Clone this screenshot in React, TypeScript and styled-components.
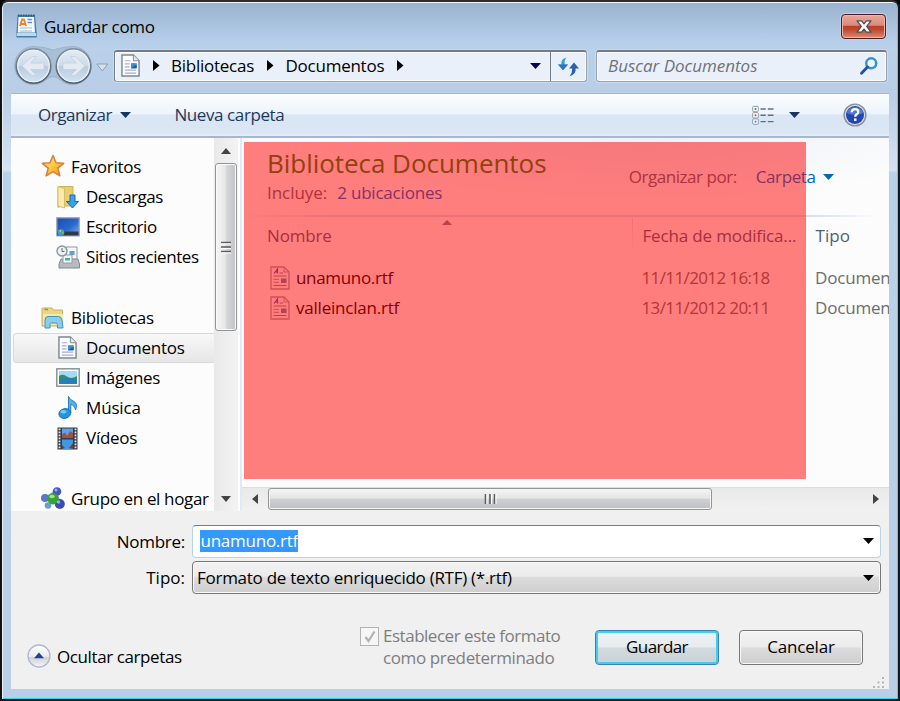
import React from 'react';
import styled, { createGlobalStyle } from 'styled-components';

const Global = createGlobalStyle`
  * { box-sizing: border-box; }
  body { margin: 0; background: #000; color: #000; font-family: "Open Sans", "Noto Sans", sans-serif; }
  svg { display: block; flex: none; overflow: visible; }
`;

/* ---------- text ---------- */
const Text = styled.span<{ $size?: number; $color?: string; $ls?: number; $italic?: boolean; $ml?: number }>`
  flex: none;
  font-size: ${p => p.$size ?? 17}px;
  line-height: 22px;
  white-space: pre;
  letter-spacing: ${p => p.$ls ?? -0.35}px;
  color: ${p => p.$color ?? '#000'};
  font-style: ${p => (p.$italic ? 'italic' : 'normal')};
  margin-left: ${p => p.$ml ?? 0}px;
`;

/* ---------- window frame ---------- */
const Frame = styled.div`
  width: 900px;
  height: 701px;
  overflow: hidden;
  display: flex;
  flex-direction: column;
  padding: 0 9px 10px 9px;
  border: 2px solid #16191c;
  border-top-color: #302d2d;
  border-left-color: #111;
  border-radius: 8px 8px 0 0;
  background: linear-gradient(#99b3d0 0, #a3bcd8 14px, #b5cde8 38px, #b9d1ea 46px, #b9cde6 90px, #d4e2f2 168px, #b9d1ea 171px, #b9cfe9 100%);
  box-shadow: inset 0 2px 0 -1px #f4f8fb, inset 1px 0 0 #e8eff7, inset -1px 0 0 #3fd2ee, inset 0 -1px 0 #35d0ec;
`;
const TitleBar = styled.header`
  flex: none;
  height: 43px;
  display: flex;
  align-items: flex-start;
  padding: 12px 3px 0 5px;
`;
const TitleText = styled.div`
  flex: 1;
  display: flex;
  padding: 2px 0 0 6px;
`;
const CloseButton = styled.button`
  width: 45px;
  height: 25px;
  padding: 0;
  display: flex;
  align-items: center;
  justify-content: center;
  border: 1.5px solid #4e1a22;
  border-radius: 4px;
  background: linear-gradient(#e8a79b 0, #d9897c 45%, #bb3d25 48%, #c04a30 65%, #dc8c72 100%);
  box-shadow: inset 0 0 0 1px #efb6ab, 0 0 0 1px #c3d3e6;
`;

/* ---------- navigation bar ---------- */
const NavBar = styled.nav`
  flex: none;
  height: 48px;
  display: flex;
  align-items: flex-start;
  padding: 0 2px 0 1px;
`;
const AddressBar = styled.div`
  width: 473px;
  height: 32px;
  margin: 5px 0 0 5px;
  display: flex;
  border: 1px solid #98a1ad;
  border-top: 2px solid #747b85;
  border-left-color: #747b85;
  border-radius: 3px;
  background: #e9f0f9;
  box-shadow: inset 0 0 0 1px #f8fbff, 0 0 0 1px #c8daed;
`;
const Crumbs = styled.div`
  flex: 1;
  display: flex;
  align-items: center;
  padding: 0 9px 2px 6px;
`;
const Spring = styled.div`
  flex: 1;
`;
const RefreshCell = styled.div`
  width: 36px;
  display: flex;
  align-items: center;
  justify-content: center;
  border-left: 1.5px solid #747b85;
`;
const SearchBox = styled.div`
  flex: 1;
  height: 32px;
  margin: 5px 0 0 9px;
  display: flex;
  align-items: center;
  justify-content: space-between;
  padding: 0 8px 2px 11px;
  border: 1px solid #98a1ad;
  border-top: 2px solid #747b85;
  border-radius: 3px;
  background: #e9f0f9;
  box-shadow: inset 0 0 0 1px #f8fbff, 0 0 0 1px #c8daed;
`;

/* ---------- toolbar ---------- */
const Toolbar = styled.div`
  flex: none;
  height: 45px;
  display: flex;
  align-items: center;
  padding: 0 22px 0 27px;
  border-top: 1px solid #9fb8d4;
  border-bottom: 2px solid #a5b8cf;
  background: linear-gradient(#fbfdff 0, #edf4fc 47%, #dbe6f4 50%, #dbe6f4 92%, #e6eef8 100%);
`;

/* ---------- body ---------- */
const Body = styled.main`
  flex: none;
  height: 373px;
  display: flex;
  background: #fcfcfc;
`;
const Sidebar = styled.aside`
  flex: none;
  width: 203px;
  padding: 13.500px 0 0 1.500px;
  overflow: hidden;
`;
const TreeItem = styled.div<{ $level?: number; $active?: boolean }>`
  height: 30.2px;
  display: flex;
  align-items: center;
  gap: 6px;
  padding-left: ${p => (p.$level ? 41.5 : 27.5)}px;
  border: 1.5px solid ${p => (p.$active ? '#d9d9d9' : 'transparent')};
  border-right: 0;
  border-radius: 4px 0 0 4px;
  background: ${p => (p.$active ? 'linear-gradient(#f8f8f8, #e6e6e6)' : 'none')};
`;
const Gap = styled.div`
  height: 30.2px;
`;
const VScroll = styled.div`
  flex: none;
  width: 23.5px;
  display: flex;
  flex-direction: column;
  align-items: center;
  background: linear-gradient(90deg, #e9e9e9, #f3f3f3);
`;
const ScrollArrow = styled.div<{ $w: number; $h: number }>`
  width: ${p => p.$w}px;
  height: ${p => p.$h}px;
  display: flex;
  align-items: center;
  justify-content: center;
`;
const VThumb = styled.div`
  width: 21.5px;
  height: 168px;
  display: flex;
  align-items: center;
  justify-content: center;
  border: 1.5px solid #959595;
  border-radius: 3px;
  background: linear-gradient(90deg, #f5f5f5 0, #e8e8e9 45%, #d3d4d6 55%, #c2c3c6 100%);
  box-shadow: inset 0 0 0 1px #fafafa;
`;
const Splitter = styled.div`
  width: 4px;
  border-left: 2px solid #fff;
  background: #dfeaf7;
`;
const FilePane = styled.section`
  position: relative;
  flex: 1;
  min-width: 0;
  display: flex;
  flex-direction: column;
  overflow: hidden;
  background: radial-gradient(ellipse 330px 62px at 400px 0, #eef1f8, #fcfcfc);
`;
const LibraryHeader = styled.div`
  flex: none;
  height: 77px;
  display: flex;
  justify-content: space-between;
  padding: 14px 55px 0 25.5px;
`;
const LibraryTitle = styled.div`
  display: flex;
  flex-direction: column;
  gap: 8px;
`;
const Line = styled.div`
  display: flex;
`;
const Arrange = styled.div`
  display: flex;
  align-items: center;
  height: 22px;
  margin-top: 14px;
`;
const HeaderRule = styled.div`
  flex: none;
  height: 2px;
  margin-right: 10px;
  background: linear-gradient(90deg, transparent, #d4e2f1 15%, #d4e2f1 90%, transparent);
`;
const Columns = styled.div`
  flex: none;
  height: 30.2px;
  display: grid;
  grid-template-columns: 366.5px 173px 200px;
  align-items: center;
  padding-left: 25.5px;
`;
const ColumnHeader = styled(Columns)`
  height: 37px;
  margin-bottom: 9px;
`;
const HeaderCell = styled.div<{ $rule?: boolean }>`
  height: 36px;
  display: flex;
  align-items: center;
  margin-left: ${p => (p.$rule ? -2 : 0)}px;
  padding-left: ${p => (p.$rule ? 10 : 0)}px;
  border-left: ${p => (p.$rule ? 1 : 0)}px solid;
  border-image: linear-gradient(#d8e4f1, transparent) 1;
`;
const SortMark = styled.div`
  margin: -27px 0 0 110px;
`;
const Cell = styled.div<{ $inset?: number }>`
  display: flex;
  align-items: center;
  padding-left: ${p => p.$inset ?? 0}px;
`;
const HScroll = styled.div`
  flex: none;
  height: 24px;
  display: flex;
  align-items: center;
  padding-bottom: 1px;
  border-top: 1px solid #dedede;
  background: linear-gradient(#e9e9e9, #f1f1f1);
`;
const HThumb = styled.div`
  width: 444px;
  height: 22px;
  display: flex;
  align-items: center;
  justify-content: center;
  border: 1.5px solid #959595;
  border-radius: 3px;
  background: linear-gradient(#f5f5f5 0, #e5e5e6 45%, #cecfd1 52%, #bfc0c4 100%);
  box-shadow: inset 0 0 0 1px #f5f5f5;
`;
const Highlight = styled.div`
  position: absolute;
  left: 2.5px;
  top: 4px;
  width: 562px;
  height: 337px;
  background: rgba(255, 0, 0, 0.5);
`;

/* ---------- footer ---------- */
const Footer = styled.footer`
  flex: 1;
  display: flex;
  flex-direction: column;
  padding: 14px 8px 0 0;
  background: #f0f0f0;
`;
const Field = styled.div`
  display: grid;
  grid-template-columns: 174px 1fr;
  column-gap: 7px;
  align-items: center;
  justify-items: end;
  margin-bottom: 3px;
`;
const Combo = styled.div<{ $edit?: boolean }>`
  width: 100%;
  height: 33px;
  display: flex;
  align-items: center;
  justify-content: space-between;
  padding: 0 6px ${p => (p.$edit ? 2 : 0)}px ${p => (p.$edit ? 6.5 : 4)}px;
  border-radius: 4px;
  border: 1.5px solid ${p => (p.$edit ? '#b5d5ec' : '#777')};
  border-top-color: ${p => (p.$edit ? '#4a8bc4' : '#777')};
  background: ${p => (p.$edit ? '#fff' : 'linear-gradient(#f3f3f3 0, #ececec 45%, #dcdcdc 50%, #cecece 100%)')};
  box-shadow: ${p => (p.$edit ? 'none' : 'inset 0 0 0 1px #f8f8f8')};
`;
const Selected = styled.span`
  height: 22px;
  display: flex;
  align-items: center;
  padding: 0 0 0 1px;
  background: #3399ff;
`;
const Actions = styled.div`
  display: flex;
  align-items: flex-start;
  padding: 32px 0 0 16px;
`;
const Toggle = styled.div`
  flex: none;
  width: 333px;
  display: flex;
  align-items: center;
  gap: 6px;
  padding-top: 15px;
`;
const CheckLabel = styled.label`
  flex: none;
  width: 235px;
  display: flex;
  gap: 4px;
`;
const CheckBox = styled.span`
  width: 19px;
  height: 19px;
  margin-top: -2px;
  display: flex;
  align-items: center;
  justify-content: center;
  border: 1.5px solid #b3b3b3;
  background: #f6f6f6;
`;
const CheckLines = styled.span`
  display: flex;
  flex-direction: column;
  margin-top: -4px;
`;
const Button = styled.button<{ $primary?: boolean }>`
  flex: none;
  width: 124px;
  height: 35px;
  margin: 1px 20px 0 0;
  padding: 0 0 2px;
  display: flex;
  align-items: center;
  justify-content: center;
  font-family: inherit;
  border-radius: 4px;
  border: 1.5px solid ${p => (p.$primary ? '#3c7fb1' : '#777')};
  background: ${p => (p.$primary ? 'linear-gradient(#f0f2f3 0, #e7ecee 48%, #d3dadd 52%, #cad3d8 100%)' : 'linear-gradient(#f3f3f3 0, #ebebeb 48%, #dcdcdc 52%, #cecece 100%)')};
  box-shadow: ${p => (p.$primary ? 'inset 0 0 0 2px #3fcdf4' : 'inset 0 0 0 1px #f8f8f8')};
`;
const Grip = styled.div`
  display: flex;
  justify-content: flex-end;
  margin: 7px -4px 0 0;
`;

/* ---------- icons ---------- */
const Tri = ({ dir, w, h, color = '#000' }: { dir: 'up' | 'down' | 'left' | 'right'; w: number; h: number; color?: string }) => {
  const d = {
    up: `M0 ${h}L${w / 2} 0L${w} ${h}Z`,
    down: `M0 0H${w}L${w / 2} ${h}Z`,
    left: `M${w} 0V${h}L0 ${h / 2}Z`,
    right: `M0 0V${h}L${w} ${h / 2}Z`,
  }[dir];
  return <svg width={w} height={h}><path d={d} fill={color} /></svg>;
};

const WordpadIcon = () => (
  <svg width="22" height="24" viewBox="0 0 22 24">
    <path d="M1.5 1H19L21 22.5Q21 23.5 20 23.5H1Q0 23 .3 22Z" fill="#477fa6" />
    <path d="M1 19H20L20.5 22H.5Z" fill="#b8dced" />
    <path d="M2.5 3H18L19 18.5H1.8Z" fill="#f7fbff" />
    <path d="M2 1.5H18.6" stroke="#2d5d83" strokeWidth="1.8" strokeDasharray="1.5 1" />
    <path d="M4 12L6 5.5H8L10 12M5 10H9.5" fill="none" stroke="#f08323" strokeWidth="1.8" />
    <path d="M11.5 5.5H16M11.5 8.5H16" stroke="#5890e4" strokeWidth="1.6" />
    <path d="M4 14H16M4 17H16" stroke="#a4b9d2" strokeWidth="1.2" />
  </svg>
);
const CloseGlyph = () => (
  <svg width="16" height="13" viewBox="0 0 16 13">
    <path d="M1 .8H5.6L8 3.8L10.4.8H15L10.7 6.4L15 12.2H10.4L8 9.1L5.6 12.2H1L5.3 6.4Z" fill="#f5f5f5" stroke="#4d4a56" strokeWidth="1.2" strokeLinejoin="round" />
  </svg>
);
const NavButtons = () => (
  <svg width="97" height="40" viewBox="0 0 97 40">
    <defs>
      <linearGradient id="disc" x1="0" y1="0" x2="0" y2="1">
        <stop offset="0" stopColor="#e4edf5" />
        <stop offset=".48" stopColor="#cddbe8" />
        <stop offset=".52" stopColor="#b9cbde" />
        <stop offset="1" stopColor="#d3e3f3" />
      </linearGradient>
      <linearGradient id="rim" x1="0" y1="0" x2="0" y2="1">
        <stop offset="0" stopColor="#8292a4" />
        <stop offset="1" stopColor="#556272" />
      </linearGradient>
    </defs>
    <path d="M21 1.500Q31 1.500 41.500 5Q52 1.500 61 1.500A19 19 0 1 1 47 34Q41 29 35 34A19 19 0 1 1 21 1.500Z" fill="#a9bfd6" stroke="#9db2c9" />
    {[21.5, 61.5].map(x => (
      <g key={x}>
        <circle cx={x} cy="21" r="17.200" fill="url(#disc)" stroke="url(#rim)" strokeWidth="1.800" />
        <circle cx={x} cy="21" r="15.700" fill="none" stroke="#eaf2f9" strokeWidth="1.300" />
      </g>
    ))}
    <path d="M10 21L20 11.500H24.500L18.500 18H32V24.500H18.500L24.500 30.500H20Z" fill="#e3eaf1" stroke="#c3d0dd" strokeWidth=".8" />
    <path d="M73 21L63 11.500H58.500L64.500 18H51V24.500H64.500L58.500 30.500H63Z" fill="#e3eaf1" stroke="#c3d0dd" strokeWidth=".8" />
    <path d="M84.800 19H95.800L90.300 26Z" fill="#d3e0ed" stroke="#8c9fb3" />
  </svg>
);
const DocIcon = () => (
  <svg width="19" height="23" viewBox="0 0 20 24">
    <path d="M1 1H13L19 7V23H1Z" fill="#fcfdff" stroke="#7f868d" strokeWidth="1.500" />
    <path d="M13 1V7H19" fill="#e4e7ea" stroke="#7f868d" />
    <path d="M4 7H10M4 10.300H9M4 13.500H9M4 16.800H16M4 20H16" stroke="#a6abd0" strokeWidth="1.200" />
    <rect x="10.500" y="9.500" width="6" height="5.500" fill="#3a8fd6" />
    <path d="M10.500 15L16.500 11V15Z" fill="#245a8b" />
  </svg>
);
const RefreshIcon = () => (
  <svg width="21" height="20" viewBox="0 0 21 20">
    <path d="M0 7.500H3.400Q2.500 2 8.500 .5Q5.800 3.500 6.800 7.500H10L5 13.300Z" fill="#359bdb" />
    <path d="M21 11.500H17.600Q18.500 17.500 11.500 19.200Q14.500 15.800 14.200 11.500H11L16 5.500Z" fill="#2a62ad" />
    <path d="M0 7.500H10L5 13.300Z" fill="#2f74be" />
  </svg>
);
const SearchIcon = () => (
  <svg width="18" height="18" viewBox="0 0 18 18">
    <circle cx="11.200" cy="6.300" r="5" fill="#eaf7fd" stroke="#3292d3" strokeWidth="2.500" />
    <path d="M7.500 10L1.500 16.200" stroke="#244f9f" strokeWidth="2.800" strokeLinecap="round" />
  </svg>
);
const ViewIcon = () => (
  <svg width="22" height="19" viewBox="0 0 22 19">
    {[['#3c9a40', 3], ['#e03a2b', 9.3], ['#3e7fdc', 15.6]].map(([c, y]) => (
      <g key={c}>
        <rect x=".7" y={+y - 2.7} width="5.600" height="5.400" rx="1" fill="#fff" stroke="#8a99ac" />
        <rect x="2.600" y={+y - 0.9} width="1.800" height="1.800" fill={c as string} />
        <path d={`M8.500 ${y}H13.800M15.800 ${y}H21.500`} stroke="#5d7088" strokeWidth="1.400" />
      </g>
    ))}
  </svg>
);
const HelpIcon = () => (
  <svg width="24" height="24" viewBox="0 0 24 24">
    <circle cx="12" cy="12" r="10.900" fill="#d5d8df" stroke="#8c919b" strokeWidth="1.400" />
    <circle cx="12" cy="12" r="9" fill="#2147b4" />
    <path d="M3.500 10A9 9 0 0 1 20.500 10Q12 14 3.500 10Z" fill="#5376cf" />
    <path d="M8.700 9.300Q8.900 6.200 12.200 6.200Q15.300 6.200 15.300 8.900Q15.300 10.300 13.700 11.300Q12.200 12.200 12.200 13.800" fill="none" stroke="#fff" strokeWidth="2.300" />
    <rect x="11" y="15.400" width="2.500" height="2.500" fill="#fff" />
  </svg>
);
const StarIcon = () => (
  <svg width="24" height="23" viewBox="0 0 24 23">
    <defs>
      <linearGradient id="star" x1="0" y1="0" x2="1" y2="1">
        <stop offset="0" stopColor="#fff0a0" /><stop offset=".5" stopColor="#fdc93e" /><stop offset="1" stopColor="#f59325" />
      </linearGradient>
    </defs>
    <path d="M12 .5L15 7.800L22.700 8.300L16.800 13.200L18.800 20.800L12 16.600L5.200 20.800L7.200 13.200L1.300 8.300L9 7.800Z" fill="url(#star)" stroke="#dd7d3a" strokeWidth="1.500" strokeLinejoin="round" />
  </svg>
);
const DownloadIcon = () => (
  <svg width="24" height="24" viewBox="0 0 24 24">
    <path d="M3 1.500H17V21H5L2 22.500V2Z" fill="#e9cf73" stroke="#d0b156" />
    <path d="M2 1.500L8.500 3.500V23L2 21Z" fill="#f8ebad" stroke="#d8bd65" />
    <path d="M14 10H19V16.500H22.500L16.500 23L10.500 16.500H14Z" fill="#35a4ea" stroke="#1769ae" strokeLinejoin="round" />
  </svg>
);
const DesktopIcon = () => (
  <svg width="24" height="20" viewBox="0 0 24 20">
    <defs>
      <linearGradient id="desk" x1="0" y1="0" x2="1" y2="1">
        <stop offset="0" stopColor="#1b4cac" /><stop offset=".55" stopColor="#2a68cc" /><stop offset="1" stopColor="#7fb2ee" />
      </linearGradient>
    </defs>
    <rect x=".8" y=".8" width="22.400" height="18" fill="url(#desk)" stroke="#9aa5b0" strokeWidth="1.300" />
    <rect x="1.500" y="14.500" width="21" height="4" fill="#303a45" />
    <circle cx="5" cy="15.500" r="3.300" fill="#4097dd" /><path d="M3 14L5 12.800V15.500Z" fill="#f0c537" /><path d="M5.500 15.500L7.500 14.500V17Z" fill="#77cc4e" />
  </svg>
);
const RecentIcon = () => (
  <svg width="24" height="24" viewBox="0 0 24 24">
    <path d="M10 2H21V16H10Z" fill="#f5f7f9" stroke="#8e979f" />
    <rect x="13.500" y="6" width="5" height="4" fill="#54a4db" />
    <path d="M3 19L5 14H22L23.500 19V23H3Z" fill="#b7bbbf" stroke="#82888e" />
    <path d="M7 10H16V18H7Z" fill="#f3f8fb" stroke="#949ca3" /><rect x="9" y="13" width="5" height="2.500" fill="#43aeb5" />
    <circle cx="6" cy="6" r="5" fill="#edf1f4" stroke="#8b949c" strokeWidth="1.400" />
    <path d="M6 3V6.500H8.500" fill="none" stroke="#5d6870" />
  </svg>
);
const LibraryIcon = () => (
  <svg width="24" height="22" viewBox="0 0 24 22">
    <path d="M1 2Q1 1 2 1H11L12.500 3H21.500V19H1Z" fill="#ecd584" stroke="#cbb05d" />
    <path d="M3.500 2.500H7" stroke="#51b449" strokeWidth="1.500" /><path d="M2 7H22V18H2Z" fill="#f8e9a8" />
    <path d="M4 21V13Q4 9.500 7 9.500H17.500Q20.500 9.500 21 13L22 21H16.500V17.500Q16.500 16 15 16H10.500Q9 16 9 17.500V21Z" fill="#8bcdec" stroke="#3f95bf" />
  </svg>
);
const PictureIcon = () => (
  <svg width="24" height="19" viewBox="0 0 24 19">
    <rect x=".8" y=".8" width="22.400" height="17.400" fill="#fff" stroke="#858c92" strokeWidth="1.400" />
    <rect x="3" y="3" width="18" height="13" fill="#a1dcf7" />
    <path d="M3 8Q7 5.500 11 8.500T21 8V12H3Z" fill="#368b68" /><path d="M3 11.500Q12 9 21 11.500V16H3Z" fill="#237fc0" />
  </svg>
);
const MusicIcon = () => (
  <svg width="22" height="24" viewBox="0 0 22 24">
    <path d="M11.500 17V.5Q13 4 17 5.500Q21 8 18.500 14Q17.500 9 13.800 8.500V17" fill="#4fb3ea" stroke="#1f74b4" strokeWidth=".9" />
    <ellipse cx="7.800" cy="17.500" rx="6" ry="4.800" fill="#2595dc" stroke="#1c6dab" strokeWidth=".9" transform="rotate(-15 7.800 17.500)" />
    <ellipse cx="6.500" cy="15.800" rx="3" ry="1.700" fill="#74caf4" />
  </svg>
);
const VideoIcon = () => (
  <svg width="21" height="23" viewBox="0 0 21 23">
    <rect x=".5" y=".5" width="20" height="22" fill="#353b42" />
    <path d="M2.500 1.500V22M18.500 1.500V22" stroke="#e5e8ea" strokeWidth="1.800" strokeDasharray="1.700 1.300" />
    <rect x="5" y="1.500" width="11" height="9.500" fill="#58a5e2" /><path d="M5 11V7.500L8 5.500L10 9L13 4L16 6V11Z" fill="#a44e45" />
    <rect x="5" y="12.500" width="11" height="9.500" fill="#3f97e8" /><path d="M5 22V18L8 21ZM16 22V16L12 21Z" fill="#7a3c37" />
  </svg>
);
const HomegroupIcon = () => (
  <svg width="24" height="23" viewBox="0 0 24 23">
    <path d="M4 11L15 4L19 17Z" fill="none" stroke="#8ba0ca" strokeWidth="2" />
    <circle cx="16" cy="4.500" r="4.300" fill="#4457bb" /><circle cx="4" cy="11" r="4" fill="#5a78c4" />
    <circle cx="18.800" cy="17" r="5" fill="#3a4db3" /><circle cx="7" cy="18.500" r="3.300" fill="#6f99d7" />
    <circle cx="12" cy="11.800" r="5.600" fill="#35a52f" /><ellipse cx="11" cy="9.500" rx="2.800" ry="1.800" fill="#a1e28c" />
    <circle cx="17.500" cy="15" r="1.700" fill="#9dabe5" /><circle cx="15" cy="3" r="1.500" fill="#9dabe5" />
  </svg>
);
const RtfIcon = () => (
  <svg width="20" height="24" viewBox="0 0 20 24">
    <path d="M1 1H14L19 6V23H1Z" fill="#fdfdfd" stroke="#9a9fa6" strokeWidth="1.300" />
    <path d="M14 1V6H19" fill="none" stroke="#9a9fa6" />
    <path d="M4 7.500L7.500 3V7.500M5.500 6H8" stroke="#5b4cc0" strokeWidth="1.200" fill="none" /><path d="M9.500 7H13" stroke="#7277b7" />
    <path d="M3.500 10H16.500M3.500 19.500H16.500" stroke="#7b858f" strokeWidth="1.200" /><path d="M3.500 13.300H9M3.500 16.400H9" stroke="#a3aab4" strokeWidth="1.200" />
    <rect x="11" y="12.500" width="5.500" height="4.500" fill="#6a86a3" />
  </svg>
);
const CollapseIcon = () => (
  <svg width="24" height="26" viewBox="0 0 24 26">
    <defs><linearGradient id="collapse" x1="0" y1="0" x2="0" y2="1"><stop offset="0" stopColor="#fff" /><stop offset=".52" stopColor="#ececec" /><stop offset=".56" stopColor="#cfd2d2" /><stop offset="1" stopColor="#f5f6f6" /></linearGradient></defs>
    <circle cx="12" cy="12" r="11" fill="url(#collapse)" stroke="#b0b6d8" strokeWidth="1.300" />
    <path d="M7 14.300L12 8.600L17 14.300Z" fill="#273f98" />
  </svg>
);
const CheckGlyph = () => (
  <svg width="12" height="13" viewBox="0 0 12 13"><path d="M1.500 7L4.500 11L10.500 1.500" fill="none" stroke="#b3b3b3" strokeWidth="2.300" /></svg>
);
const GripGlyph = () => (
  <svg width="12" height="12" viewBox="0 0 12 12">
    {[[9, 0], [9, 4.5], [9, 9], [4.5, 4.5], [4.5, 9], [0, 9]].map(([x, y]) => <rect key={`${x}-${y}`} x={x} y={y} width="2" height="2" fill="#b5b5b5" />)}
  </svg>
);
const Ridges = ({ vertical }: { vertical?: boolean }) => (
  <svg width="12" height="12" viewBox="0 0 12 12">
    <path d={vertical ? 'M1.500 1V11M6 1V11M10.500 1V11' : 'M1 1.500H11M1 6H11M1 10.500H11'} stroke="#5e5e5e" strokeWidth="1.600" />
    <path d={vertical ? 'M3 1V11M7.500 1V11M12 1V11' : 'M1 3H11M1 7.500H11M1 12H11'} stroke="#fff" />
  </svg>
);

/* ---------- data ---------- */
type TreeEntry = { label: string; icon: React.ReactNode; ls: number; level?: number; active?: boolean };
const tree: (TreeEntry | null)[] = [
  { label: 'Favoritos', icon: <StarIcon />, ls: -0.28 },
  { label: 'Descargas', icon: <DownloadIcon />, ls: -0.5, level: 1 },
  { label: 'Escritorio', icon: <DesktopIcon />, ls: -0.38, level: 1 },
  { label: 'Sitios recientes', icon: <RecentIcon />, ls: -0.42, level: 1 },
  null,
  { label: 'Bibliotecas', icon: <LibraryIcon />, ls: -0.28 },
  { label: 'Documentos', icon: <DocIcon />, ls: -0.26, level: 1, active: true },
  { label: 'Imágenes', icon: <PictureIcon />, ls: -0.35, level: 1 },
  { label: 'Música', icon: <MusicIcon />, ls: -0.15, level: 1 },
  { label: 'Vídeos', icon: <VideoIcon />, ls: -0.25, level: 1 },
  null,
  { label: 'Grupo en el hogar', icon: <HomegroupIcon />, ls: -0.36 },
];
const files = [
  { name: 'unamuno.rtf', ls: -0.32, date: '11/11/2012 16:18' },
  { name: 'valleinclan.rtf', ls: -0.22, date: '13/11/2012 20:11' },
];
const IconSlot = styled.span<{ $level?: number }>`
  width: ${p => (p.$level ? 25 : 24)}px;
  display: flex;
  justify-content: center;
`;
const Spacer = styled.div<{ $w: number }>`
  flex: none;
  width: ${p => p.$w}px;
`;

export default function App() {
  return (
    <>
      <Global />
      <Frame>
        <TitleBar>
          <WordpadIcon />
          <TitleText><Text $ls={-0.35}>Guardar como</Text></TitleText>
          <CloseButton aria-label="Cerrar"><CloseGlyph /></CloseButton>
        </TitleBar>
        <NavBar>
          <NavButtons />
          <AddressBar>
            <Crumbs>
              <DocIcon />
              <Spacer $w={12.5} />
              <Tri dir="right" w={6.5} h={11} />
              <Text $ls={-0.25} $ml={12}>Bibliotecas</Text>
              <Spacer $w={13} />
              <Tri dir="right" w={6.5} h={11} />
              <Text $ls={-0.25} $ml={12}>Documentos</Text>
              <Spacer $w={13} />
              <Tri dir="right" w={6.5} h={11} />
              <Spring />
              <Tri dir="down" w={11} h={6} color="#06064e" />
            </Crumbs>
            <RefreshCell><RefreshIcon /></RefreshCell>
          </AddressBar>
          <SearchBox>
            <Text $italic $ls={-0.02} $color="#707276">Buscar Documentos</Text>
            <SearchIcon />
          </SearchBox>
        </NavBar>
        <Toolbar>
          <Text $ls={-0.45} $color="#1e395b">Organizar</Text>
          <Spacer $w={8} />
          <Tri dir="down" w={11} h={6} color="#17365d" />
          <Text $ls={-0.4} $ml={43.500} $color="#1e395b">Nueva carpeta</Text>
          <Spring />
          <ViewIcon />
          <Spacer $w={15} />
          <Tri dir="down" w={11} h={6} color="#17365d" />
          <Spacer $w={43} />
          <HelpIcon />
        </Toolbar>
        <Body>
          <Sidebar>
            {tree.map((t, i) => t ? (
              <TreeItem key={i} $level={t.level} $active={t.active}>
                <IconSlot $level={t.level}>{t.icon}</IconSlot>
                <Text $ls={t.ls}>{t.label}</Text>
              </TreeItem>
            ) : <Gap key={i} />)}
          </Sidebar>
          <VScroll>
            <ScrollArrow $w={23} $h={25}><Tri dir="up" w={10} h={6} color="#444" /></ScrollArrow>
            <VThumb><Ridges /></VThumb>
            <Spring />
            <ScrollArrow $w={23} $h={24}><Tri dir="down" w={10} h={6} color="#444" /></ScrollArrow>
          </VScroll>
          <Splitter />
          <FilePane>
            <LibraryHeader>
              <LibraryTitle>
                <Text $size={26} $ls={-0.04} $color="#268020">Biblioteca Documentos</Text>
                <Line>
                  <Text $ls={-0.05} $color="#5a6779">Incluye:</Text>
                  <Text $ls={-0.2} $ml={10} $color="#0066cc">2 ubicaciones</Text>
                </Line>
              </LibraryTitle>
              <Arrange>
                <Text $ls={-0.45} $color="#5a6779">Organizar por:</Text>
                <Text $ls={-0.4} $ml={19} $color="#0066cc">Carpeta</Text>
                <Spacer $w={7.5} />
                <Tri dir="down" w={11} h={6} color="#0066cc" />
              </Arrange>
            </LibraryHeader>
            <HeaderRule />
            <ColumnHeader>
              <HeaderCell>
                <Text $ls={-0.15} $color="#4c607a">Nombre</Text>
                <SortMark><Tri dir="up" w={10} h={5} color="#6f8299" /></SortMark>
              </HeaderCell>
              <HeaderCell $rule><Text $ls={-0.15} $color="#4c607a">Fecha de modifica...</Text></HeaderCell>
              <HeaderCell $rule><Text $ls={0.1} $color="#4c607a">Tipo</Text></HeaderCell>
            </ColumnHeader>
            {files.map(f => (
              <Columns key={f.name}>
                <Cell $inset={3}><RtfIcon /><Text $ls={f.ls} $ml={6}>{f.name}</Text></Cell>
                <Cell $inset={8}><Text $ls={-0.62} $color="#6d6d6d">{f.date}</Text></Cell>
                <Cell $inset={8.500}><Text $ls={-0.18} $color="#6d6d6d">Documento</Text></Cell>
              </Columns>
            ))}
            <Spring />
            <HScroll>
              <ScrollArrow $w={26.5} $h={22}><Tri dir="left" w={6} h={10} color="#444" /></ScrollArrow>
              <HThumb><Ridges vertical /></HThumb>
              <Spring />
              <ScrollArrow $w={26} $h={22}><Tri dir="right" w={6} h={10} color="#444" /></ScrollArrow>
            </HScroll>
            <Highlight />
          </FilePane>
        </Body>
        <Footer>
          <Field>
            <Text $ls={-0.25}>Nombre:</Text>
            <Combo $edit>
              <Selected><Text $ls={-0.25} $color="#fff">unamuno.rtf</Text></Selected>
              <Tri dir="down" w={11} h={6} />
            </Combo>
          </Field>
          <Field>
            <Text $ls={0}>Tipo:</Text>
            <Combo>
              <Text $ls={-0.27}>Formato de texto enriquecido (RTF) (*.rtf)</Text>
              <Tri dir="down" w={11} h={6} />
            </Combo>
          </Field>
          <Actions>
            <Toggle><CollapseIcon /><Text $ls={-0.4}>Ocultar carpetas</Text></Toggle>
            <CheckLabel>
              <CheckBox><CheckGlyph /></CheckBox>
              <CheckLines>
                <Text $ls={-0.48} $color="#7e7e7e">Establecer este formato</Text>
                <Text $ls={-0.38} $color="#7e7e7e">como predeterminado</Text>
              </CheckLines>
            </CheckLabel>
            <Button $primary><Text $ls={-0.6}>Guardar</Text></Button>
            <Button><Text $ls={-0.18}>Cancelar</Text></Button>
          </Actions>
          <Grip><GripGlyph /></Grip>
        </Footer>
      </Frame>
    </>
  );
}
